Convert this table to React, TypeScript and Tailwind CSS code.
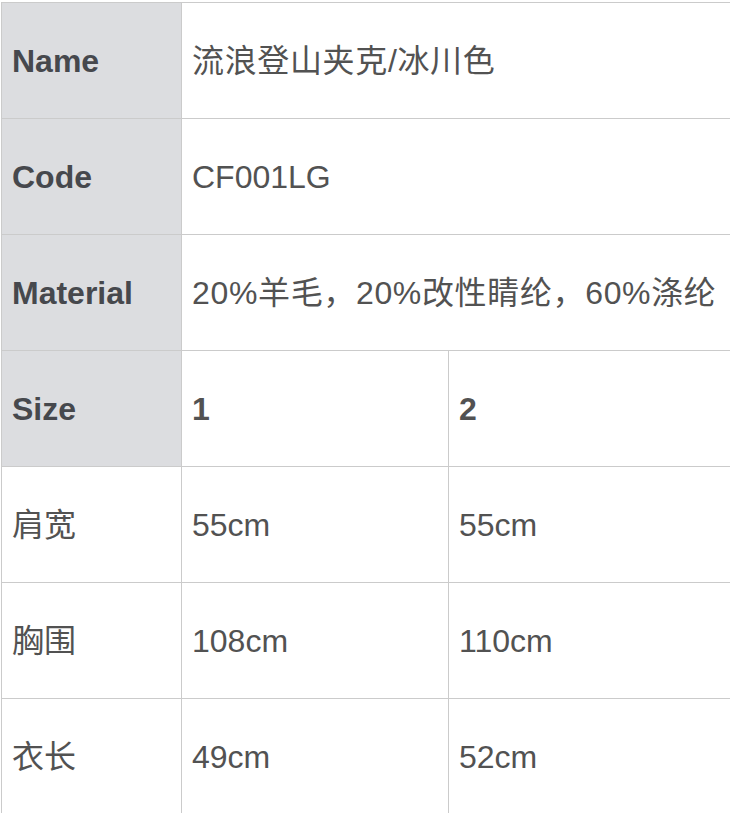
import React from 'react';

const font = { fontFamily: '"Liberation Sans", "Noto Sans CJK SC", sans-serif' };

const head = [
  { label: 'Name', value: '流浪登山夹克/冰川色', wide: true },
  { label: 'Code', value: 'CF001LG', wide: false },
  { label: 'Material', value: '20%羊毛，20%改性睛纶，60%涤纶', wide: true },
];

const sizes = [
  { label: '肩宽', a: '55cm', b: '55cm' },
  { label: '胸围', a: '108cm', b: '110cm' },
  { label: '衣长', a: '49cm', b: '52cm' },
];

export default function App() {
  const cell = 'border border-[#cbcbcb] h-[116px] pl-[10px] pr-[10px] align-middle text-[32px] whitespace-nowrap';
  const th = `${cell} bg-[#dcdde0] font-bold text-[#46484d] text-left`;
  const td = `${cell} bg-white text-[#525252]`;

  return (
    <div className="w-[730px] h-[813px] overflow-hidden bg-white pt-[2px] pl-[1px]" style={font}>
      <table className="table-fixed border-collapse w-[760px]">
        <colgroup>
          <col className="w-[180px]" />
          <col className="w-[267px]" />
          <col />
        </colgroup>
        <tbody>
          {head.map((r) => (
            <tr key={r.label}>
              <th className={th}>{r.label}</th>
              <td className={`${td} ${r.wide ? 'tracking-[0.65px]' : ''}`} colSpan={2}>
                {r.value}
              </td>
            </tr>
          ))}
          <tr>
            <th className={th}>Size</th>
            <td className={`${td} font-bold text-[#46484d]`}>1</td>
            <td className={`${td} font-bold text-[#46484d]`}>2</td>
          </tr>
          {sizes.map((r) => (
            <tr key={r.label}>
              <td className={td}>{r.label}</td>
              <td className={td}>{r.a}</td>
              <td className={td}>{r.b}</td>
            </tr>
          ))}
        </tbody>
      </table>
    </div>
  );
}
